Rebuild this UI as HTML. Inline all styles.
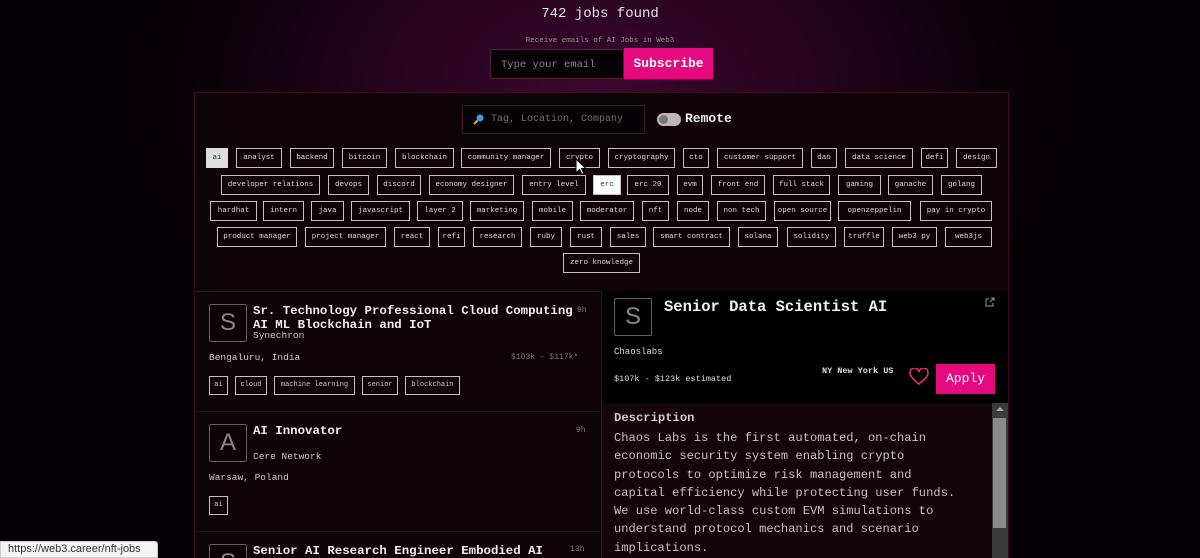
<!DOCTYPE html>
<html style="width:1200px;height:558px;overflow:hidden;background:#050005"><head><meta charset="utf-8"><style>
*{box-sizing:border-box;margin:0;padding:0}
body{width:1200px;height:558px;overflow:hidden;position:relative;font-family:"Liberation Mono",monospace;color:#e8e0e4;
background:radial-gradient(ellipse 480px 330px at 600px 90px,#3a0830 0%,#25041d 45%,#0c0109 80%,#050005 100%);}
.a{position:absolute}
.title{left:0;width:1200px;top:6px;text-align:center;font-size:14px;color:#e8e0e4}
.sub{left:0;width:1200px;top:37px;text-align:center;font-size:7.5px;color:#9a8a92}
.email{left:490px;top:49px;width:134px;height:30px;background:#050104;border:1px solid #5a1a36;color:#8a8088;font-size:10.5px;padding:9px 0 0 10px}
.subs{left:624px;top:48px;width:89px;height:31px;background:#e4097f;color:#fff;font-size:13px;font-weight:bold;text-align:center;padding-top:8px}
.panel{left:194px;top:92px;width:815px;height:466px;background:#0e0307;border:1px solid #3a1020;border-bottom:none}
.search{left:462px;top:105px;width:183px;height:29px;background:#050104;border:1px solid #4a1428;color:#7a6e74;font-size:10px;padding:8px 0 0 28px}
.tog{left:657px;top:113px;width:24px;height:13px;border-radius:7px;background:#bdb5b8}
.tog:after{content:"";position:absolute;left:2px;top:2px;width:9px;height:9px;border-radius:50%;background:#777}
.rem{left:685px;top:111px;font-size:13px;font-weight:bold;color:#eee}
.t{position:absolute;height:20px;border:1px solid #c8bfc3;font-size:7.5px;line-height:18px;text-align:center;color:#ddd;white-space:nowrap;overflow:hidden}
.w{background:#fff;color:#333}
.g{background:#ddd;color:#333;border-color:#ddd}
.left{left:195px;top:291px;width:406px;height:267px;background:#0e0307}
.sep{height:1px;background:#2a0a16;position:absolute}
.logo{position:absolute;width:38px;height:38px;border:1px solid #6a5e64;border-radius:2px;color:#888;font-family:"Liberation Sans",sans-serif;font-size:24px;text-align:center;line-height:36px}
.jt{position:absolute;font-size:12.4px;font-weight:bold;color:#f2eef0;line-height:14px;white-space:nowrap}
.sm{position:absolute;font-size:9.5px;color:#ccc;white-space:nowrap}
.tg{position:absolute;height:19px;border:1px solid #c8bfc3;font-size:7px;line-height:17px;text-align:center;color:#ccc;white-space:nowrap;overflow:hidden}
.right{left:602px;top:291px;width:406px;height:112px;background:#000}
.desc{left:602px;top:403px;width:390px;height:155px;background:#140308}
</style></head><body>
<div class="a title">742 jobs found</div>
<div class="a sub">Receive emails of AI Jobs in Web3</div>
<div class="a email">Type your email</div>
<div class="a subs">Subscribe</div>
<div class="a panel"></div>
<div class="a search">Tag, Location, Company</div>
<svg class="a" style="left:473px;top:114px" width="11" height="11"><circle cx="7" cy="4" r="3.5" fill="#3a9ee0"/><path d="M4.5 6.5L1 10" stroke="#f0a040" stroke-width="2"/></svg>
<div class="a tog"></div>
<div class="a rem">Remote</div>

<div class="t g" style="left:206px;top:148px;width:22px">ai</div>
<div class="t" style="left:236px;top:148px;width:46px">analyst</div>
<div class="t" style="left:290px;top:148px;width:44px">backend</div>
<div class="t" style="left:342px;top:148px;width:45px">bitcoin</div>
<div class="t" style="left:395px;top:148px;width:59px">blockchain</div>
<div class="t" style="left:461px;top:148px;width:90px">community manager</div>
<div class="t" style="left:559px;top:148px;width:41px">crypto</div>
<div class="t" style="left:608px;top:148px;width:67px">cryptography</div>
<div class="t" style="left:683px;top:148px;width:26px">cto</div>
<div class="t" style="left:717px;top:148px;width:86px">customer support</div>
<div class="t" style="left:811px;top:148px;width:26px">dao</div>
<div class="t" style="left:845px;top:148px;width:68px">data science</div>
<div class="t" style="left:921px;top:148px;width:27px">defi</div>
<div class="t" style="left:956px;top:148px;width:41px">design</div>

<div class="t" style="left:221px;top:175px;width:99px">developer relations</div>
<div class="t" style="left:328px;top:175px;width:41px">devops</div>
<div class="t" style="left:377px;top:175px;width:44px">discord</div>
<div class="t" style="left:429px;top:175px;width:85px">economy designer</div>
<div class="t" style="left:522px;top:175px;width:64px">entry level</div>
<div class="t w" style="left:593px;top:175px;width:28px">erc</div>
<div class="t" style="left:627px;top:175px;width:42px">erc 20</div>
<div class="t" style="left:677px;top:175px;width:26px">evm</div>
<div class="t" style="left:711px;top:175px;width:54px">front end</div>
<div class="t" style="left:773px;top:175px;width:57px">full stack</div>
<div class="t" style="left:838px;top:175px;width:43px">gaming</div>
<div class="t" style="left:888px;top:175px;width:45px">ganache</div>
<div class="t" style="left:941px;top:175px;width:41px">golang</div>

<div class="t" style="left:210px;top:201px;width:47px">hardhat</div>
<div class="t" style="left:263px;top:201px;width:41px">intern</div>
<div class="t" style="left:311px;top:201px;width:33px">java</div>
<div class="t" style="left:351px;top:201px;width:59px">javascript</div>
<div class="t" style="left:417px;top:201px;width:46px">layer 2</div>
<div class="t" style="left:470px;top:201px;width:54px">marketing</div>
<div class="t" style="left:532px;top:201px;width:41px">mobile</div>
<div class="t" style="left:580px;top:201px;width:54px">moderator</div>
<div class="t" style="left:642px;top:201px;width:27px">nft</div>
<div class="t" style="left:677px;top:201px;width:32px">node</div>
<div class="t" style="left:717px;top:201px;width:49px">non tech</div>
<div class="t" style="left:774px;top:201px;width:57px">open source</div>
<div class="t" style="left:838px;top:201px;width:73px">openzeppelin</div>
<div class="t" style="left:920px;top:201px;width:72px">pay in crypto</div>

<div class="t" style="left:217px;top:227px;width:80px">product manager</div>
<div class="t" style="left:305px;top:227px;width:81px">project manager</div>
<div class="t" style="left:394px;top:227px;width:36px">react</div>
<div class="t" style="left:438px;top:227px;width:27px">refi</div>
<div class="t" style="left:473px;top:227px;width:49px">research</div>
<div class="t" style="left:530px;top:227px;width:32px">ruby</div>
<div class="t" style="left:570px;top:227px;width:32px">rust</div>
<div class="t" style="left:610px;top:227px;width:36px">sales</div>
<div class="t" style="left:653px;top:227px;width:77px">smart contract</div>
<div class="t" style="left:738px;top:227px;width:40px">solana</div>
<div class="t" style="left:787px;top:227px;width:49px">solidity</div>
<div class="t" style="left:844px;top:227px;width:40px">truffle</div>
<div class="t" style="left:892px;top:227px;width:45px">web3 py</div>
<div class="t" style="left:945px;top:227px;width:47px">web3js</div>
<div class="t" style="left:563px;top:253px;width:77px">zero knowledge</div>

<div class="a left"></div>
<div class="sep" style="left:195px;top:291px;width:813px;background:#3a1020"></div>
<div class="sep" style="left:195px;top:411px;width:406px"></div>
<div class="sep" style="left:195px;top:531px;width:406px"></div>
<div class="sep" style="left:601px;top:291px;width:1px;height:267px;background:#3a1020"></div>

<div class="logo" style="left:209px;top:304px">S</div>
<div class="jt" style="left:253px;top:304px">Sr. Technology Professional Cloud Computing<br>AI ML Blockchain and IoT</div>
<div class="sm" style="left:577px;top:306px;font-size:8px;color:#777">9h</div>
<div class="sm" style="left:253px;top:330px">Synechron</div>
<div class="sm" style="left:209px;top:352px">Bengaluru, India</div>
<div class="sm" style="left:511px;top:353px;font-size:8px;color:#777">$103k - $117k*</div>
<div class="tg" style="left:209px;top:376px;width:19px">ai</div>
<div class="tg" style="left:235px;top:376px;width:32px">cloud</div>
<div class="tg" style="left:274px;top:376px;width:81px">machine learning</div>
<div class="tg" style="left:362px;top:376px;width:36px">senior</div>
<div class="tg" style="left:405px;top:376px;width:55px">blockchain</div>

<div class="logo" style="left:209px;top:424px">A</div>
<div class="jt" style="left:253px;top:424px">AI Innovator</div>
<div class="sm" style="left:576px;top:426px;font-size:8px;color:#777">9h</div>
<div class="sm" style="left:253px;top:451px">Cere Network</div>
<div class="sm" style="left:209px;top:472px">Warsaw, Poland</div>
<div class="tg" style="left:209px;top:496px;width:19px">ai</div>
<div class="logo" style="left:209px;top:544px">S</div>
<div class="jt" style="left:253px;top:544px">Senior AI Research Engineer Embodied AI</div>
<div class="sm" style="left:570px;top:545px;font-size:8px;color:#777">13h</div>

<div class="a right"></div>
<div class="logo" style="left:614px;top:298px">S</div>
<div class="a" style="left:664px;top:298px;font-size:15.5px;font-weight:bold;color:#f4f0f2;white-space:nowrap">Senior Data Scientist AI</div>
<svg class="a" style="left:985px;top:297px" width="10" height="10"><path d="M4 2H1v7h7V6M5 5l4-4M6 1h3v3" stroke="#999" fill="none"/></svg>
<div class="sm" style="left:614px;top:347px;font-size:9px;color:#ddd">Chaoslabs</div>
<div class="sm" style="left:614px;top:374px;font-size:8.5px;color:#ddd">$107k - $123k estimated</div>
<div class="sm" style="left:822px;top:366px;font-size:8.5px;font-weight:bold;color:#ddd">NY New York US</div>
<svg class="a" style="left:909px;top:368px" width="20" height="18"><path d="M10 16C4 11 1 8 1 5a4 4 0 0 1 9-1 4 4 0 0 1 9 1c0 3-3 6-9 11z" stroke="#e0306a" stroke-width="1.6" fill="none"/></svg>
<div class="a" style="left:936px;top:364px;width:59px;height:30px;background:#e4097f;color:#fff;font-size:13px;text-align:center;padding-top:7px">Apply</div>
<div class="a desc"></div>
<div class="a" style="left:992px;top:403px;width:16px;height:155px;background:#3a3a3a"></div>
<div class="a" style="left:993px;top:418px;width:13px;height:110px;background:#8a8a8a"></div>
<div class="a" style="left:996px;top:407px;width:0;height:0;border-left:4px solid transparent;border-right:4px solid transparent;border-bottom:4px solid #aaa"></div>
<div class="a" style="left:614px;top:411px;font-size:12.2px;font-weight:bold;color:#ccc">Description</div>
<div class="a" style="left:614px;top:429px;font-size:12.1px;line-height:18.3px;color:#c8c0c4;white-space:pre">Chaos Labs is the first automated, on-chain
economic security system enabling crypto
protocols to optimize risk management and
capital efficiency while protecting user funds.
We use world-class custom EVM simulations to
understand protocol mechanics and scenario
implications.</div>

<div class="a" style="left:0;top:541px;width:158px;height:17px;background:#f4f4f4;border:1px solid #ccc;border-radius:0 3px 0 0;font-family:'Liberation Sans',sans-serif;font-size:11px;color:#333;padding:1px 0 0 7px">https://web3.career/nft-jobs</div>
<svg class="a" style="left:575px;top:158px" width="12" height="18"><path d="M1 1v14l3.5-3.5 2.5 5 2-1-2.5-5H11z" fill="#fff" stroke="#000"/></svg>
</body></html>
